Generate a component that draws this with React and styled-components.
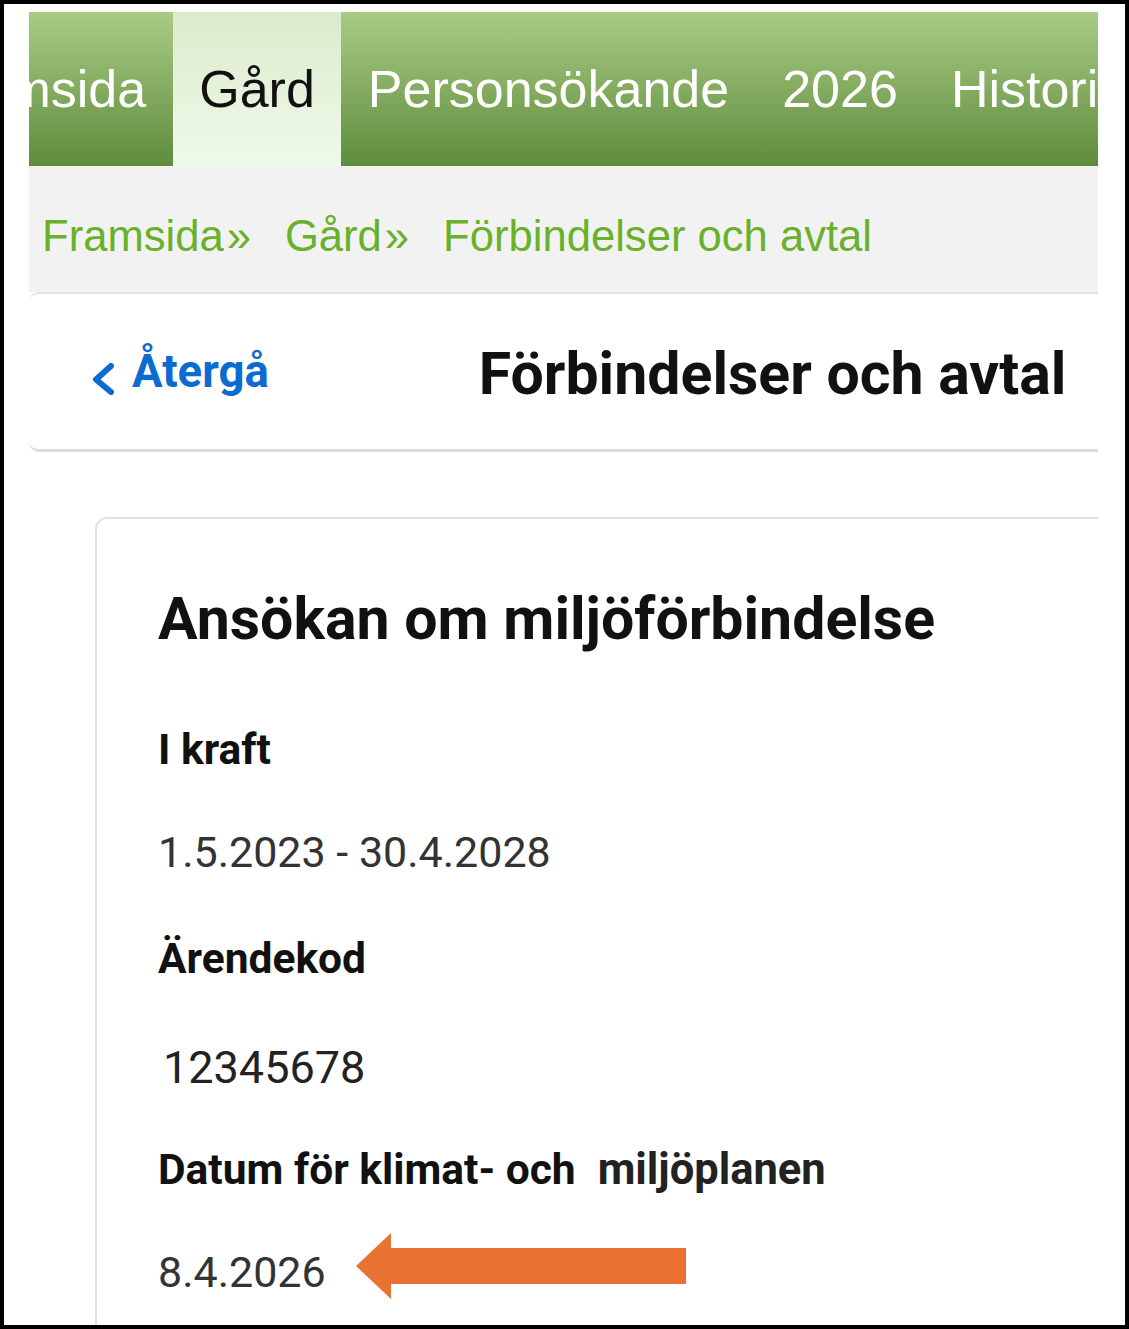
import { useLayoutEffect, useRef } from 'react';
import styled, { createGlobalStyle } from 'styled-components';

const tabs = ['Framsida', 'Gård', 'Personsökande', '2026', 'Historik'];
const activeTab = 1;
const crumbs = ['Framsida', 'Gård', 'Förbindelser och avtal'];

const fields = [
  { label: 'I kraft', value: '1.5.2023 - 30.4.2028' },
  { label: 'Ärendekod', value: '12345678', code: true },
  { label: 'Datum för klimat- och', extra: 'miljöplanen', value: '8.4.2026', marked: true },
];

const App = () => {
  const navRef = useRef(null);

  // the tab strip is scrolled so that only the end of the first tab shows
  useLayoutEffect(() => {
    const nav = navRef.current;
    if (nav && nav.firstChild) {
      nav.scrollLeft = nav.firstChild.offsetWidth - 144;
    }
  }, []);

  return (
    <>
      <GlobalStyle />
      <Page>
        <Frame>
          <Nav ref={navRef}>
            {tabs.map((tab, i) => (
              <Tab key={tab} $active={i === activeTab}>
                {tab}
              </Tab>
            ))}
          </Nav>

          <Breadcrumbs>
            {crumbs.map((crumb, i) => (
              <Crumb key={crumb} href="#">
                {crumb}
                {i < crumbs.length - 1 && <CrumbSep>»</CrumbSep>}
              </Crumb>
            ))}
          </Breadcrumbs>

          <Header>
            <BackLink href="#">
              <svg width="24" height="32" viewBox="0 0 24 32" aria-hidden="true">
                <polyline
                  points="20,3 5,16.5 20,29"
                  fill="none"
                  stroke="currentColor"
                  strokeWidth="6"
                  strokeLinecap="round"
                  strokeLinejoin="round"
                />
              </svg>
              Återgå
            </BackLink>
            <Title>Förbindelser och avtal</Title>
          </Header>

          <Content>
            <Card>
              <CardTitle>Ansökan om miljöförbindelse</CardTitle>
              {fields.map((field) => (
                <Field key={field.label}>
                  <Label>
                    {field.label}
                    {field.extra && <LabelExtra>{field.extra}</LabelExtra>}
                  </Label>
                  <ValueRow>
                    <Value $code={field.code}>{field.value}</Value>
                    {field.marked && (
                      <Arrow width="330" height="66" viewBox="0 0 330 66" aria-hidden="true">
                        <polygon points="0,33 35,0 35,15 330,15 330,51 35,51 35,66" fill="#e97132" />
                      </Arrow>
                    )}
                  </ValueRow>
                </Field>
              ))}
            </Card>
          </Content>
        </Frame>
      </Page>
    </>
  );
};

const GlobalStyle = createGlobalStyle`
  html, body {
    margin: 0;
    padding: 0;
    background: #fff;
  }

  body {
    font-family: Roboto, "Liberation Sans", Arial, sans-serif;
  }

  * {
    box-sizing: border-box;
  }
`;

const Page = styled.div`
  width: 1129px;
  height: 1329px;
  border: 4px solid #000;
  background: #fff;
  padding: 8px 0 0 25px;
  overflow: hidden;
`;

const Frame = styled.div`
  width: 1069px;
  height: 1313px;
  overflow: hidden;
  display: flex;
  flex-direction: column;
`;

const Nav = styled.nav`
  display: flex;
  height: 154px;
  flex-shrink: 0;
  overflow: hidden;
  background: linear-gradient(#a9cb85, #5f8c3c);
`;

const Tab = styled.a`
  display: flex;
  align-items: center;
  flex-shrink: 0;
  padding: 0 26.5px;
  font-family: "Liberation Sans", Arial, sans-serif;
  font-size: 52px;
  white-space: nowrap;
  color: ${({ $active }) => ($active ? '#111' : '#fff')};
  background: ${({ $active }) => ($active ? 'linear-gradient(#dbeacb, #effaea)' : 'transparent')};
`;

const Breadcrumbs = styled.div`
  display: flex;
  gap: 34px;
  height: 126px;
  flex-shrink: 0;
  padding: 46px 0 0 13px;
  background: #f2f2f2;
  font-family: "Liberation Sans", Arial, sans-serif;
  font-size: 43.6px;
`;

const Crumb = styled.a`
  color: #69b12a;
  text-decoration: none;
  white-space: nowrap;
`;

const CrumbSep = styled.span`
  margin-left: 3px;
`;

const Header = styled.div`
  display: flex;
  align-items: center;
  height: 160px;
  flex-shrink: 0;
  padding-left: 63px;
  background: #fff;
  border-top: 2px solid #e3e3e3;
  border-bottom: 3px solid #dcdcdc;
  border-radius: 10px 0 0 10px;
`;

const BackLink = styled.a`
  display: flex;
  align-items: center;
  gap: 17px;
  color: #0b6bd0;
  font-size: 45.5px;
  font-weight: 700;
  text-decoration: none;

  svg {
    margin: 14px 0 0 -1px;
  }
`;

const Title = styled.h1`
  margin: 4px 0 0 210px;
  font-size: 59px;
  font-weight: 700;
  color: #111;
  white-space: nowrap;
`;

const Content = styled.main`
  flex: 1;
  padding: 65px 0 0 66px;
  background: #fff;
`;

const Card = styled.section`
  width: calc(100% + 40px);
  min-height: 1000px;
  padding: 70px 0 0 61px;
  border: 2px solid #e1e1e1;
  border-radius: 12px 0 0 0;
`;

const CardTitle = styled.h2`
  margin: 0 0 81px;
  font-size: 59px;
  line-height: 59px;
  font-weight: 700;
  color: #111;
  white-space: nowrap;
`;

const Field = styled.div`
  & + & {
    margin-top: 64px;
  }
`;

const Label = styled.div`
  font-size: 42.5px;
  line-height: 42px;
  font-weight: 700;
  color: #111;
  margin-bottom: 60px;
  white-space: nowrap;
`;

const LabelExtra = styled.span`
  margin-left: 22px;
  font-size: 43.5px;
  color: #222;
`;

const ValueRow = styled.div`
  display: flex;
  align-items: center;
`;

const Value = styled.div`
  font-size: ${({ $code }) => ($code ? '45px' : '43px')};
  line-height: ${({ $code }) => ($code ? '45px' : '43px')};
  color: ${({ $code }) => ($code ? '#222' : '#333')};
  padding-left: ${({ $code }) => ($code ? '5px' : '0')};
  margin: ${({ $code }) => ($code ? '5px 0 -5px' : '0')};
  white-space: nowrap;
`;

/* the arrow overhangs the value row without changing its height */
const Arrow = styled.svg`
  flex-shrink: 0;
  margin: -30px 0 -16px 30px;
`;

export default App;
